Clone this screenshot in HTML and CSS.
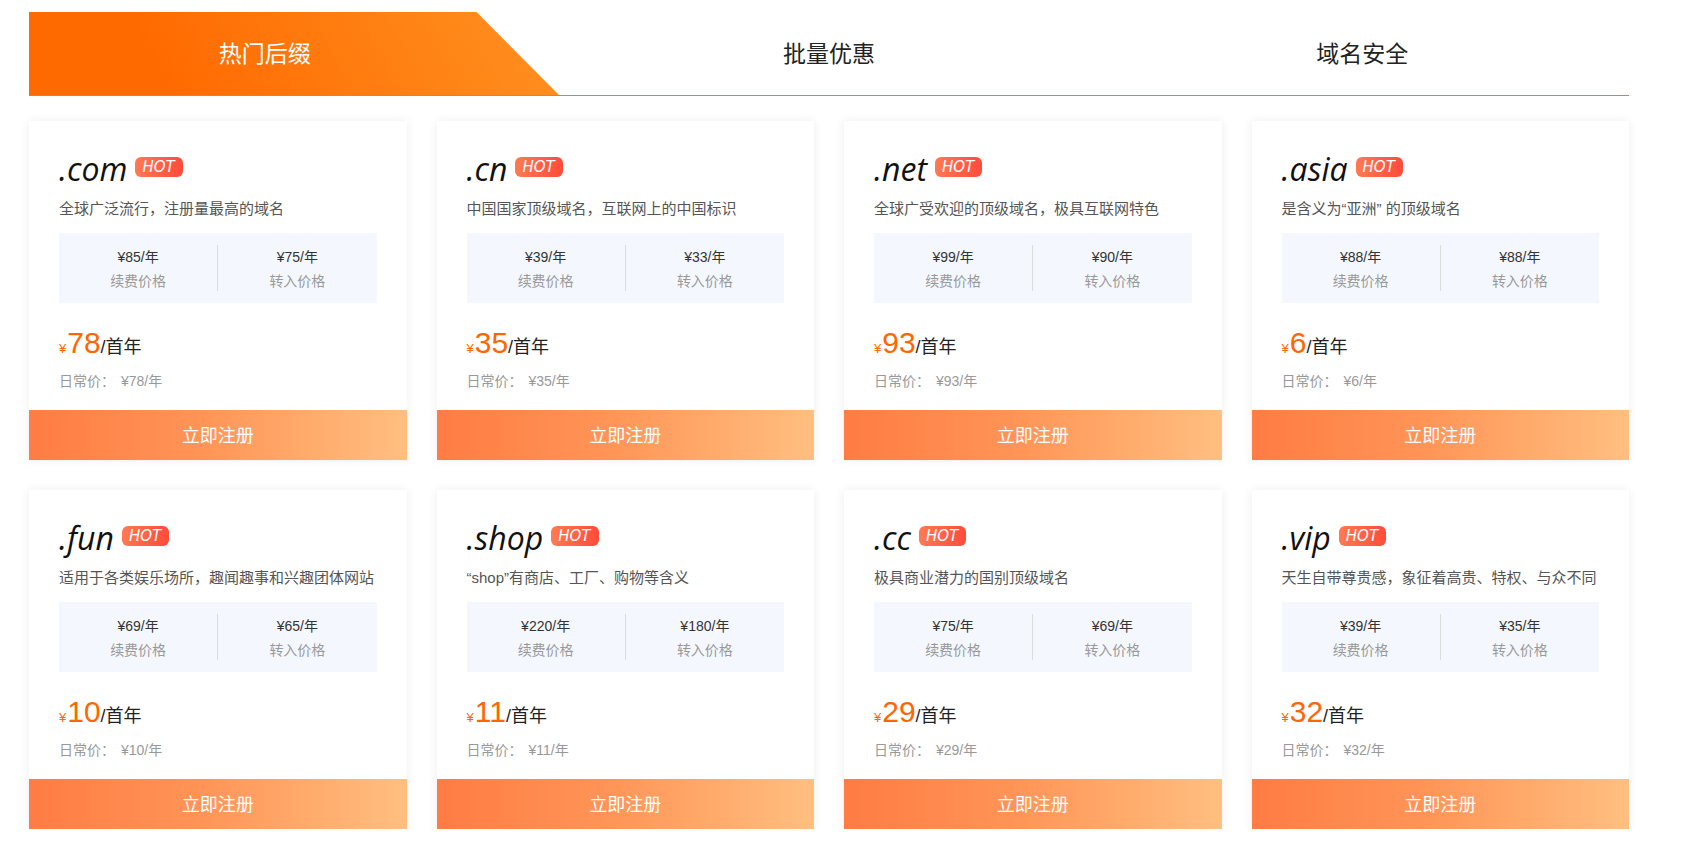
FILE: index.html
```html
<!DOCTYPE html>
<html lang="zh-CN">
<head>
<meta charset="utf-8">
<title>域名注册</title>
<link rel="stylesheet" href="styles.css">
</head>
<body>
<div class="page">
  <div class="tabs">
    <div class="tab tab-active"><span>热门后缀</span></div>
    <div class="tab"><span>批量优惠</span></div>
    <div class="tab"><span>域名安全</span></div>
  </div>
  <div class="grid">
    <div class="card">
      <div class="body">
        <div class="title"><span class="tld">.com</span><span class="hot">HOT</span></div>
        <div class="desc">全球广泛流行，注册量最高的域名</div>
        <div class="box">
          <div class="col"><div class="p">¥85/年</div><div class="l">续费价格</div></div>
          <div class="col col-r"><div class="p">¥75/年</div><div class="l">转入价格</div></div>
        </div>
        <div class="price"><span class="yen">¥</span><span class="num">78</span><span class="unit">/首年</span></div>
        <div class="normal">日常价：<span class="nv">¥78/年</span></div>
      </div>
      <div class="btn">立即注册</div>
    </div>
    <div class="card">
      <div class="body">
        <div class="title"><span class="tld">.cn</span><span class="hot">HOT</span></div>
        <div class="desc">中国国家顶级域名，互联网上的中国标识</div>
        <div class="box">
          <div class="col"><div class="p">¥39/年</div><div class="l">续费价格</div></div>
          <div class="col col-r"><div class="p">¥33/年</div><div class="l">转入价格</div></div>
        </div>
        <div class="price"><span class="yen">¥</span><span class="num">35</span><span class="unit">/首年</span></div>
        <div class="normal">日常价：<span class="nv">¥35/年</span></div>
      </div>
      <div class="btn">立即注册</div>
    </div>
    <div class="card">
      <div class="body">
        <div class="title"><span class="tld">.net</span><span class="hot">HOT</span></div>
        <div class="desc">全球广受欢迎的顶级域名，极具互联网特色</div>
        <div class="box">
          <div class="col"><div class="p">¥99/年</div><div class="l">续费价格</div></div>
          <div class="col col-r"><div class="p">¥90/年</div><div class="l">转入价格</div></div>
        </div>
        <div class="price"><span class="yen">¥</span><span class="num">93</span><span class="unit">/首年</span></div>
        <div class="normal">日常价：<span class="nv">¥93/年</span></div>
      </div>
      <div class="btn">立即注册</div>
    </div>
    <div class="card">
      <div class="body">
        <div class="title"><span class="tld">.asia</span><span class="hot">HOT</span></div>
        <div class="desc">是含义为“亚洲” 的顶级域名</div>
        <div class="box">
          <div class="col"><div class="p">¥88/年</div><div class="l">续费价格</div></div>
          <div class="col col-r"><div class="p">¥88/年</div><div class="l">转入价格</div></div>
        </div>
        <div class="price"><span class="yen">¥</span><span class="num">6</span><span class="unit">/首年</span></div>
        <div class="normal">日常价：<span class="nv">¥6/年</span></div>
      </div>
      <div class="btn">立即注册</div>
    </div>
    <div class="card">
      <div class="body">
        <div class="title"><span class="tld">.fun</span><span class="hot">HOT</span></div>
        <div class="desc">适用于各类娱乐场所，趣闻趣事和兴趣团体网站</div>
        <div class="box">
          <div class="col"><div class="p">¥69/年</div><div class="l">续费价格</div></div>
          <div class="col col-r"><div class="p">¥65/年</div><div class="l">转入价格</div></div>
        </div>
        <div class="price"><span class="yen">¥</span><span class="num">10</span><span class="unit">/首年</span></div>
        <div class="normal">日常价：<span class="nv">¥10/年</span></div>
      </div>
      <div class="btn">立即注册</div>
    </div>
    <div class="card">
      <div class="body">
        <div class="title"><span class="tld">.shop</span><span class="hot">HOT</span></div>
        <div class="desc">“shop”有商店、工厂、购物等含义</div>
        <div class="box">
          <div class="col"><div class="p">¥220/年</div><div class="l">续费价格</div></div>
          <div class="col col-r"><div class="p">¥180/年</div><div class="l">转入价格</div></div>
        </div>
        <div class="price"><span class="yen">¥</span><span class="num">11</span><span class="unit">/首年</span></div>
        <div class="normal">日常价：<span class="nv">¥11/年</span></div>
      </div>
      <div class="btn">立即注册</div>
    </div>
    <div class="card">
      <div class="body">
        <div class="title"><span class="tld">.cc</span><span class="hot">HOT</span></div>
        <div class="desc">极具商业潜力的国别顶级域名</div>
        <div class="box">
          <div class="col"><div class="p">¥75/年</div><div class="l">续费价格</div></div>
          <div class="col col-r"><div class="p">¥69/年</div><div class="l">转入价格</div></div>
        </div>
        <div class="price"><span class="yen">¥</span><span class="num">29</span><span class="unit">/首年</span></div>
        <div class="normal">日常价：<span class="nv">¥29/年</span></div>
      </div>
      <div class="btn">立即注册</div>
    </div>
    <div class="card">
      <div class="body">
        <div class="title"><span class="tld">.vip</span><span class="hot">HOT</span></div>
        <div class="desc">天生自带尊贵感，象征着高贵、特权、与众不同</div>
        <div class="box">
          <div class="col"><div class="p">¥39/年</div><div class="l">续费价格</div></div>
          <div class="col col-r"><div class="p">¥35/年</div><div class="l">转入价格</div></div>
        </div>
        <div class="price"><span class="yen">¥</span><span class="num">32</span><span class="unit">/首年</span></div>
        <div class="normal">日常价：<span class="nv">¥32/年</span></div>
      </div>
      <div class="btn">立即注册</div>
    </div>
  </div>
</div>
</body>
</html>
```

FILE: styles.css
```css
* { box-sizing: border-box; }
html, body { margin: 0; padding: 0; background: #fff; }
body {
  font-family: "Liberation Sans", "Noto Sans CJK SC", sans-serif;
  color: #333;
}
.page {
  width: 1600px;
  margin-left: 29px;
  padding-top: 12px;
}
.tabs {
  display: flex;
  height: 84px;
  border-bottom: 1px solid #f07a2c;
}
.tab {
  flex: none;
  width: 33.3333%;
  display: flex;
  align-items: center;
  justify-content: center;
  font-family: "Noto Sans CJK SC", sans-serif;
  font-size: 23px;
  line-height: 1;
  color: #222;
  padding-bottom: 2px;
}
.tab-active {
  color: #fff;
  padding-right: 62px;
  background: linear-gradient(60deg, #ff6a00 25%, #ff9222 100%);
  clip-path: polygon(0 0, 447.5px 0, 530px 100%, 0 100%);
}
.grid {
  margin-top: 25px;
  display: grid;
  grid-template-columns: repeat(4, 1fr);
  column-gap: 30px;
  row-gap: 30px;
}
.card {
  height: 339px;
  background: #fff;
  box-shadow: 0 0 10px rgba(0, 0, 0, 0.07);
  display: flex;
  flex-direction: column;
}
.body {
  flex: 1 1 auto;
  padding: 27px 30px 0;
}
.title {
  display: flex;
  align-items: center;
  height: 40px;
}
.tld {
  font-family: "Open Sans", "Noto Sans", sans-serif;
  font-style: italic;
  font-size: 32px;
  line-height: 40px;
  color: #111;
  padding-top: 2px;
}
.hot {
  margin-left: 8px;
  margin-top: -3px;
  height: 20px;
  padding: 0 8px 0 7px;
  border-radius: 6px;
  background: linear-gradient(90deg, #ff7a52, #ff4b3b);
  color: #fff;
  font-family: "DejaVu Sans", sans-serif;
  font-style: italic;
  font-size: 15px;
  line-height: 20px;
}
.desc {
  margin-top: 11px;
  font-family: "Liberation Sans", "Noto Sans CJK SC", sans-serif;
  font-size: 15px;
  line-height: 20px;
  color: #555;
  white-space: nowrap;
}
.box {
  margin-top: 14px;
  height: 70px;
  background: #f4f8fe;
  display: flex;
  align-items: center;
}
.col {
  flex: 1 1 0;
  text-align: center;
  font-size: 14px;
  line-height: 23px;
  padding-top: 1px;
}
.col-r { border-left: 1px solid #dcdcdc; }
.p { color: #333; }
.l { color: #999; font-family: "Noto Sans CJK SC", sans-serif; line-height: 22px; }
.price {
  margin-top: 22px;
  font-size: 30px;
  line-height: 36px;
  white-space: nowrap;
}
.price span { line-height: 1; }
.yen { font-size: 13px; color: #ff6600; }
.num { font-size: 30px; color: #ff6600; margin-left: 1px; }
.unit { font-size: 18px; color: #222; }
.normal {
  margin-top: 10px;
  font-size: 14px;
  line-height: 20px;
  color: #999;
}
.nv { margin-left: 6px; }
.btn {
  flex: 0 0 50px;
  height: 50px;
  display: flex;
  align-items: center;
  justify-content: center;
  background: linear-gradient(90deg, #ff7c44 0%, #ff9456 45%, #ffbf80 100%);
  color: #fff;
  font-family: "Noto Sans CJK SC", sans-serif;
  font-size: 18px;
  line-height: 1;
  padding-bottom: 2px;
}
```
